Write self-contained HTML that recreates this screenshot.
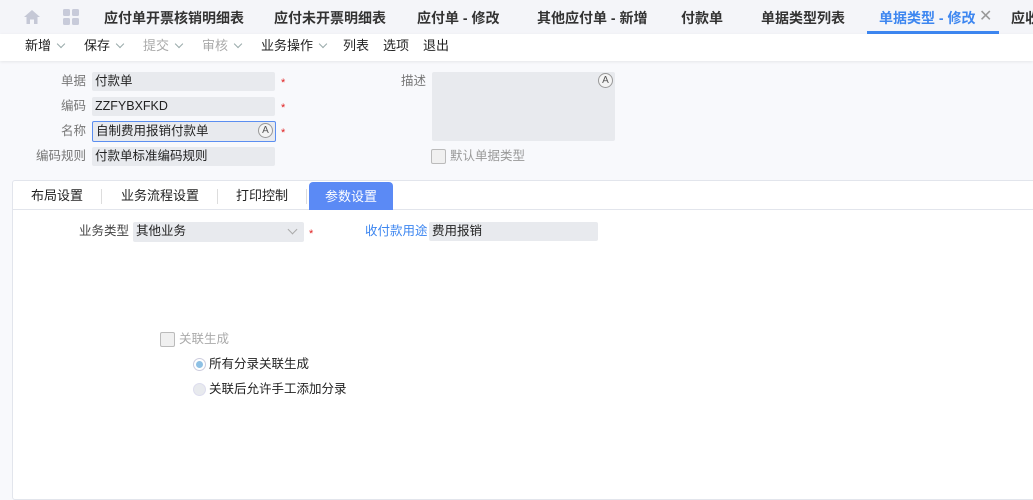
<!DOCTYPE html><html><head><meta charset="utf-8"><style>
*{margin:0;padding:0;box-sizing:border-box}
body{width:1033px;height:491px;overflow:hidden;background:#f8f9fc;font-family:"Liberation Sans","Noto Sans CJK SC",sans-serif;font-size:13px;color:#222;position:relative;line-height:1.15}
.a{position:absolute;white-space:nowrap}
.tb{position:absolute;left:0;top:0;width:1033px;height:34px;background:#f4f5f9}
.tb .a{top:10px;font-size:14px;font-weight:bold;color:#333}
.bar{position:absolute;left:0;top:34px;width:1033px;height:27px;background:#fff;box-shadow:0 1px 3px rgba(0,0,0,.08)}
.bar .a{top:5px;font-size:13px;color:#222}
.ch{display:inline-block;width:6px;height:6px;border-right:1px solid #9aa;border-bottom:1px solid #9aa;transform:rotate(45deg);margin-left:7px;position:relative;top:-3px}
.lbl{color:#777;text-align:right;font-size:12.5px}
.in{position:absolute;background:#e8eaee;border-radius:2px;font-size:12.5px;padding:2px 3px;color:#222}
.st{color:#e02020;font-size:11px}
.ai{position:absolute;width:15px;height:15px;border-radius:50%;border:1px solid #999;background:#f4f4f4;font-size:10px;text-align:center;line-height:13px;color:#555}
</style></head><body>
<div class="tb">
<svg class="a" style="left:23px;top:9px" width="18" height="16" viewBox="0 0 18 16"><path d="M9 1 L1 8 H3.5 V15 H7 V10.5 H11 V15 H14.5 V8 H17 Z" fill="#c5c8d6"/></svg>
<svg class="a" style="left:63px;top:9px" width="17" height="17"><rect x="0" y="0" width="7" height="7" rx="1.5" fill="#c8cbda"/><rect x="9" y="0" width="7" height="7" rx="1.5" fill="#c8cbda"/><rect x="0" y="9" width="7" height="7" rx="1.5" fill="#c8cbda"/><rect x="9" y="9" width="7" height="7" rx="1.5" fill="#c8cbda"/></svg>
<span class="a" style="left:104px">应付单开票核销明细表</span>
<span class="a" style="left:274px">应付未开票明细表</span>
<span class="a" style="left:417px">应付单 - 修改</span>
<span class="a" style="left:537px">其他应付单 - 新增</span>
<span class="a" style="left:681px">付款单</span>
<span class="a" style="left:761px">单据类型列表</span>
<span class="a" style="left:879px;color:#3d86f0">单据类型 - 修改</span>
<span class="a" style="left:979px;color:#999;font-weight:normal;font-size:16px;top:8px">✕</span>
<span class="a" style="left:1011px">应收</span>
<div class="a" style="left:867px;top:31px;width:132px;height:3px;background:#3d86f0"></div>
</div>
<div class="bar">
<span class="a" style="left:25px">新增<i class="ch"></i></span>
<span class="a" style="left:84px">保存<i class="ch"></i></span>
<span class="a" style="left:143px;color:#aaa">提交<i class="ch"></i></span>
<span class="a" style="left:202px;color:#aaa">审核<i class="ch"></i></span>
<span class="a" style="left:261px">业务操作<i class="ch"></i></span>
<span class="a" style="left:343px">列表</span>
<span class="a" style="left:383px">选项</span>
<span class="a" style="left:423px">退出</span>
</div>
<span class="a lbl" style="left:30px;top:74px;width:56px">单据</span>
<span class="a lbl" style="left:30px;top:99px;width:56px">编码</span>
<span class="a lbl" style="left:30px;top:124px;width:56px">名称</span>
<span class="a lbl" style="left:20px;top:149px;width:66px">编码规则</span>
<div class="in" style="left:92px;top:72px;width:183px;height:19px">付款单</div>
<div class="in" style="left:92px;top:97px;width:183px;height:19px">ZZFYBXFKD</div>
<div class="in" style="left:92px;top:121px;width:184px;height:21px;border:1px solid #5b8ef0;padding:2px 3px">自制费用报销付款单</div>
<div class="ai" style="left:258px;top:123px">A</div>
<div class="in" style="left:92px;top:147px;width:183px;height:19px">付款单标准编码规则</div>
<span class="a st" style="left:281px;top:77px">*</span>
<span class="a st" style="left:281px;top:102px">*</span>
<span class="a st" style="left:281px;top:127px">*</span>
<span class="a lbl" style="left:396px;top:74px;width:30px">描述</span>
<div class="in" style="left:432px;top:72px;width:183px;height:69px"></div>
<div class="ai" style="left:598px;top:73px">A</div>
<div class="a" style="left:431px;top:149px;width:15px;height:15px;border:1px solid #bbb;border-radius:2px;background:#f0f0f0"></div>
<span class="a" style="left:450px;top:149px;color:#999;font-size:12.5px">默认单据类型</span>
<div class="a" style="left:12px;top:180px;width:1030px;height:320px;border:1px solid #e2e5ec;border-radius:3px;background:#fff"></div>
<div class="a" style="left:12px;top:209px;width:1030px;height:1px;background:#e2e5ec"></div>
<span class="a" style="left:31px;top:189px">布局设置</span>
<div class="a" style="left:101px;top:189px;width:1px;height:15px;background:#ddd"></div>
<span class="a" style="left:121px;top:189px">业务流程设置</span>
<div class="a" style="left:217px;top:189px;width:1px;height:15px;background:#ddd"></div>
<span class="a" style="left:236px;top:189px">打印控制</span>
<div class="a" style="left:306px;top:189px;width:1px;height:15px;background:#ddd"></div>
<div class="a" style="left:309px;top:182px;width:84px;height:28px;background:#5b8af5;border-radius:4px 4px 0 0;color:#fff;text-align:center;line-height:30px">参数设置</div>
<span class="a lbl" style="left:70px;top:224px;width:59px;color:#444">业务类型</span>
<div class="in" style="left:133px;top:222px;width:171px;height:20px">其他业务</div>
<i class="a" style="left:289px;top:226px;width:7px;height:7px;border-right:1px solid #aaa;border-bottom:1px solid #aaa;transform:rotate(45deg)"></i>
<span class="a st" style="left:309px;top:228px">*</span>
<span class="a" style="left:365px;top:224px;color:#3d86f0;font-size:12.5px">收付款用途</span>
<div class="in" style="left:429px;top:222px;width:169px;height:19px">费用报销</div>
<div class="a" style="left:160px;top:332px;width:15px;height:15px;border:1px solid #bbb;border-radius:2px;background:#f0f0f0"></div>
<span class="a" style="left:179px;top:332px;color:#aaa;font-size:12.5px">关联生成</span>
<div class="a" style="left:193px;top:358px;width:13px;height:13px;border-radius:50%;border:1px solid #ccd;background:#fff"><div style="margin:2px;width:7px;height:7px;border-radius:50%;background:#8ec0e4"></div></div>
<span class="a" style="left:209px;top:357px;font-size:12.5px">所有分录关联生成</span>
<div class="a" style="left:193px;top:383px;width:13px;height:13px;border-radius:50%;border:1px solid #dde;background:#e8eaee"></div>
<span class="a" style="left:209px;top:382px;font-size:12.5px">关联后允许手工添加分录</span>
</body></html>
